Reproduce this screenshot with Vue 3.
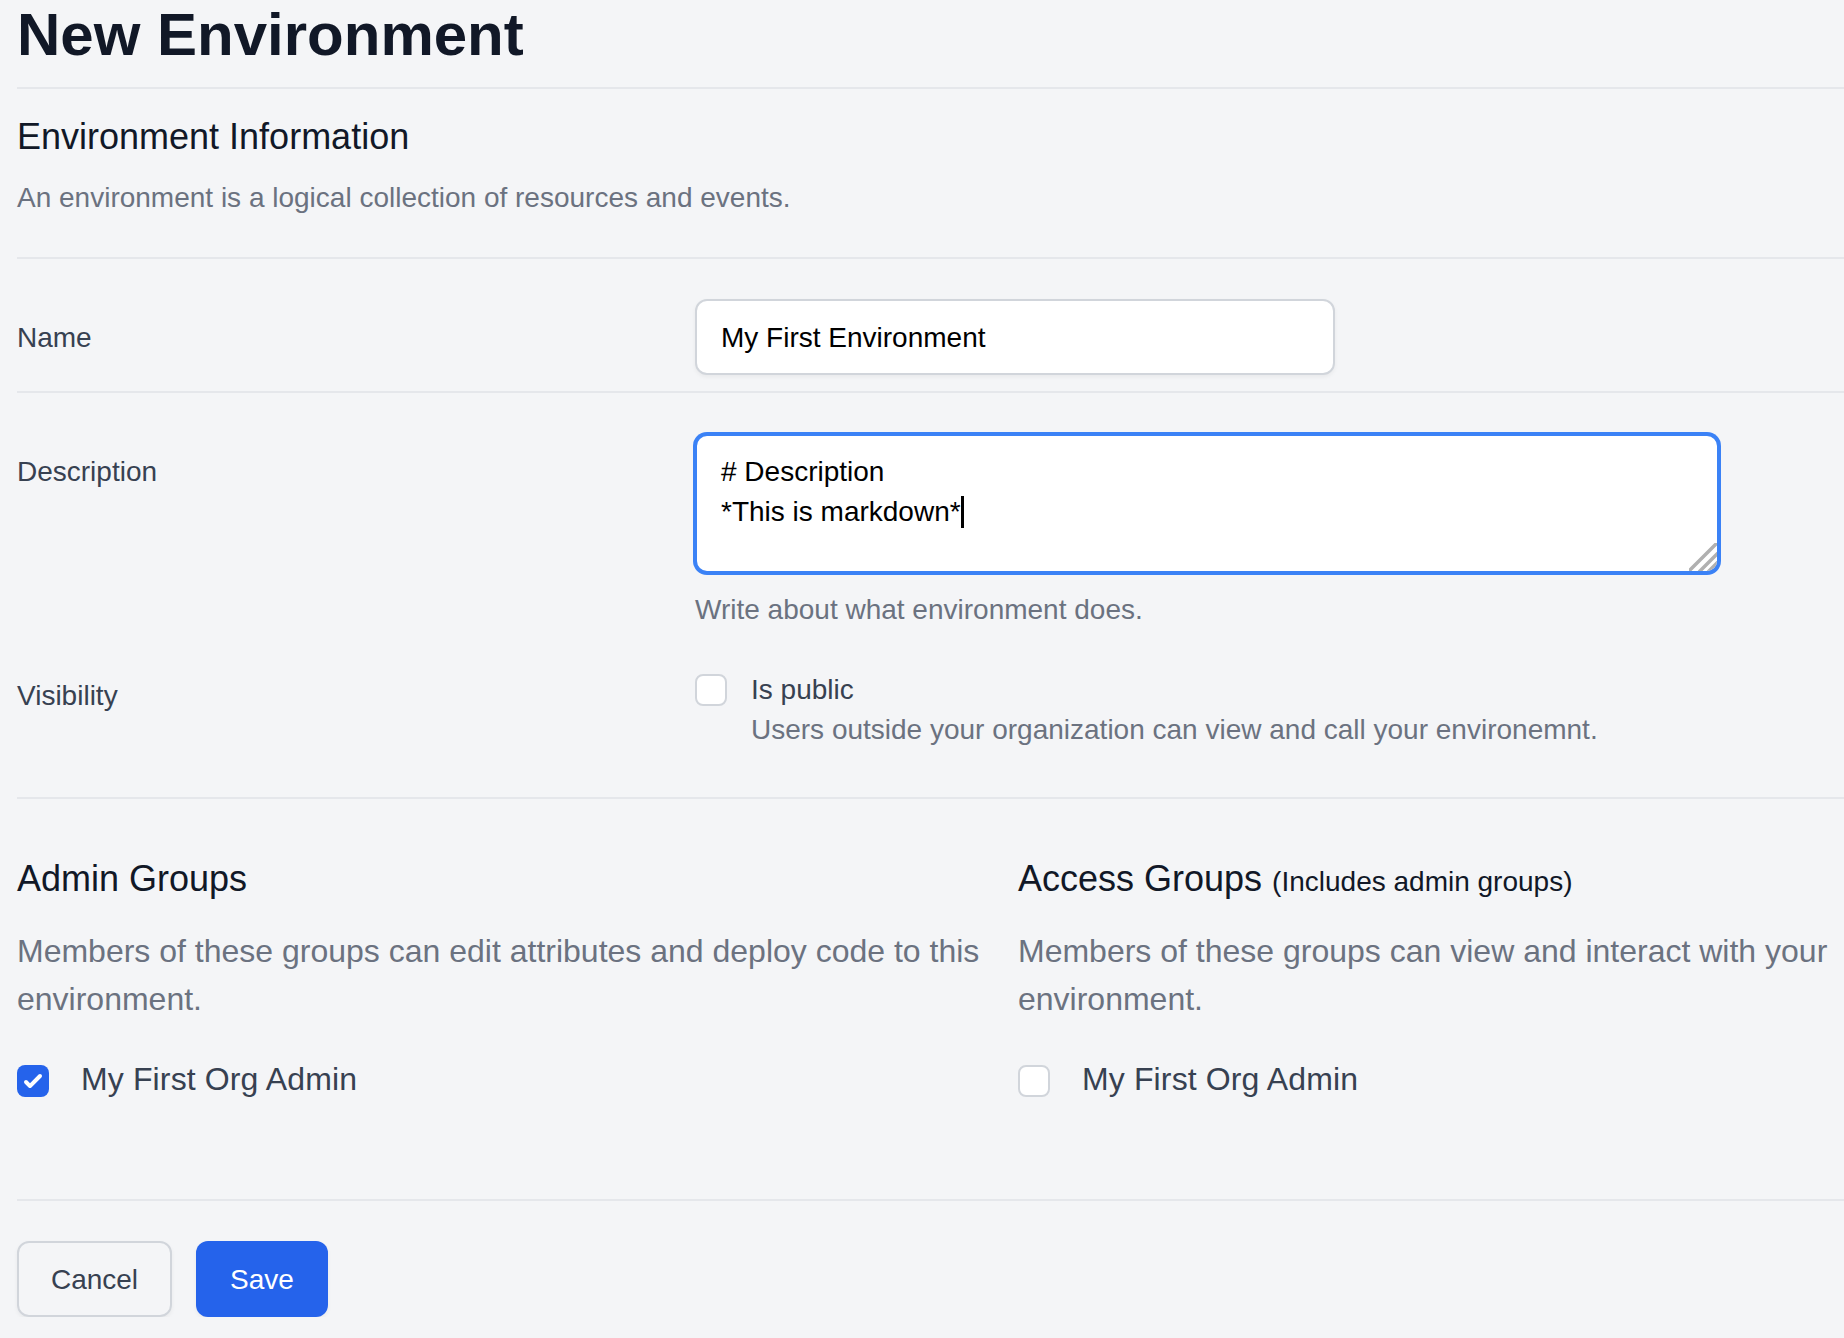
<template>
  <div class="page">
    <header class="page-header">
      <h1>New Environment</h1>
    </header>

    <section class="intro">
      <h2>Environment Information</h2>
      <p class="muted">An environment is a logical collection of resources and events.</p>
    </section>

    <div class="row row-name">
      <label class="label label-name">Name</label>
      <input class="text-input" type="text" value="My First Environment" readonly />
    </div>

    <div class="row-group">
      <div class="row row-desc">
        <label class="label label-desc">Description</label>
        <div>
          <div class="textarea">
            <div># Description</div>
            <div>*This is markdown*<span class="caret"></span></div>
            <svg class="resize-handle" width="28" height="28" viewBox="0 0 28 28">
              <path d="M29 -1L-1 29M29 10L10 29M29 19L19 29" stroke="#b0b0b0" stroke-width="3.5" fill="none"/>
            </svg>
          </div>
          <p class="muted help">Write about what environment does.</p>
        </div>
      </div>

      <div class="row row-visibility">
        <label class="label label-visibility">Visibility</label>
        <div class="check-row">
          <span class="checkbox small-offset"></span>
          <div>
            <div class="label">Is public</div>
            <div class="muted">Users outside your organization can view and call your environemnt.</div>
          </div>
        </div>
      </div>
    </div>

    <div class="groups">
      <div class="group group-admin" v-for="group in groups" :key="group.title">
        <h2>{{ group.title }} <small v-if="group.note">{{ group.note }}</small></h2>
        <p class="group-text">{{ group.text }}</p>
        <div class="group-item">
          <span class="checkbox" :class="{ checked: group.checked }">
            <svg v-if="group.checked" width="32" height="32" viewBox="0 0 16 16" fill="#fff">
              <path d="M12.207 4.793a1 1 0 010 1.414l-5 5a1 1 0 01-1.414 0l-2-2a1 1 0 011.414-1.414L6.5 9.086l4.293-4.293a1 1 0 011.414 0z"/>
            </svg>
          </span>
          <span class="group-label">My First Org Admin</span>
        </div>
      </div>
    </div>

    <footer class="actions">
      <button class="btn btn-cancel">Cancel</button>
      <button class="btn btn-save">Save</button>
    </footer>
  </div>
</template>

<script setup>
const groups = [
  {
    title: 'Admin Groups',
    text: 'Members of these groups can edit attributes and deploy code to this environment.',
    checked: true
  },
  {
    title: 'Access Groups',
    note: '(Includes admin groups)',
    text: 'Members of these groups can view and interact with your environment.',
    checked: false
  }
]
</script>

<style>
html, body {
  margin: 0;
  background: #f4f5f7;
}
</style>

<style scoped>
.page {
  padding-left: 17px;
  font-family: "Liberation Sans", Arial, sans-serif;
  font-size: 28px;
  line-height: 40px;
  color: #111827;
}
h1 {
  margin: 0;
  font-size: 60px;
  line-height: 70px;
  font-weight: 700;
}
h2 {
  margin: 0;
  font-size: 36px;
  line-height: 48px;
  font-weight: 400;
}
h2 small {
  font-size: 28px;
  line-height: 1;
  color: #111827;
}
p {
  margin: 0;
}
.page-header {
  padding-bottom: 17px;
  border-bottom: 2px solid #e5e7eb;
}
.intro {
  padding: 24px 0 39px;
  border-bottom: 2px solid #e5e7eb;
}
.intro p {
  margin-top: 17px;
}
.muted {
  color: #6b7280;
}
.label {
  color: #374151;
}
.row {
  display: grid;
  grid-template-columns: 678px 1fr;
}
.row-name {
  align-items: center;
  padding: 40px 0 16px;
  border-bottom: 2px solid #e5e7eb;
}
.label-name {
  margin-top: 2px;
}
.text-input {
  box-sizing: border-box;
  width: 640px;
  height: 76px;
  padding: 2px 24px 0;
  border: 2px solid #d1d5db;
  border-radius: 12px;
  background: #fff;
  box-shadow: 0 2px 4px rgba(0, 0, 0, 0.05);
  font: inherit;
  color: #000;
  outline: none;
}
.row-group {
  padding: 41px 0 47px;
  border-bottom: 2px solid #e5e7eb;
}
.label-desc {
  padding-top: 18px;
}
.textarea {
  position: relative;
  box-sizing: border-box;
  width: 1024px;
  height: 139px;
  padding: 16px 24px;
  border: 2px solid #3b82f6;
  border-radius: 12px;
  background: #fff;
  box-shadow: 0 0 0 2px #3b82f6;
  color: #000;
  overflow: hidden;
}
.caret {
  display: inline-block;
  width: 3px;
  height: 32px;
  background: #000;
  vertical-align: -7px;
}
.resize-handle {
  position: absolute;
  right: 0;
  bottom: 0;
}
.help {
  margin-top: 17px;
}
.row-visibility {
  margin-top: 40px;
}
.label-visibility {
  padding-top: 6px;
}
.check-row {
  display: flex;
  gap: 24px;
}
.checkbox {
  display: block;
  flex: none;
  box-sizing: border-box;
  width: 32px;
  height: 32px;
  border: 2px solid #d1d5db;
  border-radius: 8px;
  background: #fff;
}
.small-offset {
  margin-top: 4px;
}
.checkbox.checked {
  border: none;
  background: #2563eb;
}
.checkbox svg {
  display: block;
}
.groups {
  display: grid;
  grid-template-columns: 1001px 1fr;
  padding: 56px 0 96px;
  border-bottom: 2px solid #e5e7eb;
}
.group-text {
  margin-top: 24px;
  font-size: 32px;
  line-height: 48px;
  color: #6b7280;
}
.group-item {
  display: flex;
  align-items: center;
  gap: 32px;
  margin-top: 36px;
  font-size: 32px;
  line-height: 48px;
  color: #374151;
}
.group-label {
  margin-top: -4px;
  letter-spacing: 0.13px;
}
.actions {
  display: flex;
  gap: 24px;
  padding-top: 40px;
}
.btn {
  box-sizing: border-box;
  height: 76px;
  padding: 2px 0 0;
  border-radius: 12px;
  font: inherit;
  box-shadow: 0 2px 4px rgba(0, 0, 0, 0.05);
}
.btn-cancel {
  width: 155px;
  border: 2px solid #d1d5db;
  background: transparent;
  color: #374151;
}
.btn-save {
  width: 132px;
  border: none;
  background: #2563eb;
  color: #fff;
}
</style>
